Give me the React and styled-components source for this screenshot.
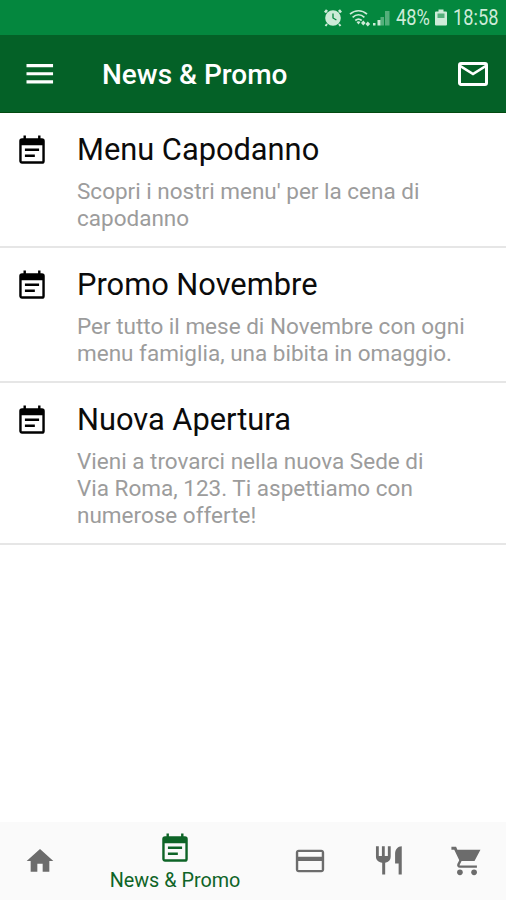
import React from "react";
import styled, { createGlobalStyle } from "styled-components";

const GlobalStyle = createGlobalStyle`
  * {
    box-sizing: border-box;
  }
  body {
    margin: 0;
    background-color: white;
    font-family: Roboto, "Liberation Sans", sans-serif;
  }
`;

const Screen = styled.div`
  width: 506px;
  height: 900px;
  display: flex;
  flex-direction: column;
  background-color: white;
  overflow: hidden;
`;

const StatusBar = styled.div`
  height: 35px;
  padding-left: 324px;
  display: flex;
  align-items: center;
  background-color: #04873e;
  color: #cdebd8;
`;

const StatusIcon = styled.svg`
  flex: none;
  display: block;
  width: ${(props) => props.$width}px;
  height: 20px;
  margin-right: ${(props) => props.$gap}px;
  fill: currentColor;
`;

const StatusText = styled.span`
  flex: none;
  width: ${(props) => props.$width}px;
  font-size: 21.5px;
  line-height: 35px;
  white-space: nowrap;
  transform: scaleX(0.85);
  transform-origin: left center;
`;

const Header = styled.header`
  height: 78px;
  padding: 0 15px 0 22px;
  display: flex;
  align-items: center;
  background-color: #046127;
  border-bottom: 1px solid #024a10;
  color: white;
`;

const HeaderTitle = styled.h1`
  flex: 1;
  margin: 2px 0 0 44px;
  font-size: 28px;
  font-weight: 500;
  line-height: 36px;
`;

const Icon = styled.svg`
  flex: none;
  display: block;
  width: ${(props) => props.$size}px;
  height: ${(props) => props.$size}px;
  fill: currentColor;
`;

const NewsList = styled.main`
  flex: 1;
`;

const NewsItem = styled.article`
  display: flex;
  padding: 18px 20px 14px 15px;
  border-bottom: 2px solid #e6e6e6;
`;

const NewsIcon = styled.div`
  padding-top: 3px;
`;

const NewsBody = styled.div`
  margin-left: 28px;
`;

const NewsTitle = styled.h2`
  margin: 0 0 9px;
  font-size: 30.8px;
  font-weight: 400;
  line-height: 38px;
  color: #0b0b0b;
`;

const NewsText = styled.p`
  margin: 0;
  font-size: 22.5px;
  line-height: 27px;
  white-space: pre-line;
  color: #9c9c9c;
`;

const TabBar = styled.nav`
  height: 78px;
  display: grid;
  grid-template-columns: 80px 190px 80px 78px 78px;
  background-color: #fafafa;
`;

const Tab = styled.div`
  display: flex;
  flex-direction: column;
  align-items: center;
  justify-content: center;
  color: ${(props) => (props.$active ? "#0e6427" : "#6c6c6c")};
`;

const TabLabel = styled.span`
  margin: 3px 0 -3px;
  font-size: 19.8px;
  line-height: 24px;
`;

function EventIcon({ size }) {
  return (
    <Icon $size={size} viewBox="0 0 24 24">
      <path d="M17 10.3H7v1.7h10zM19 3h-1V1h-1.7v2H7.7V1H6v2H5a2 2 0 0 0-2 2v14c0 1.1.9 2 2 2h14a2 2 0 0 0 2-2V5a2 2 0 0 0-2-2zm.3 16.3H4.7V8h14.6zM14 14.5H7v1.7h7z" />
    </Icon>
  );
}

const news = [
  {
    title: "Menu Capodanno",
    text: "Scopri i nostri menu' per la cena di\ncapodanno",
  },
  {
    title: "Promo Novembre",
    text: "Per tutto il mese di Novembre con ogni\nmenu famiglia, una bibita in omaggio.",
  },
  {
    title: "Nuova Apertura",
    text: "Vieni a trovarci nella nuova Sede di\nVia Roma, 123. Ti aspettiamo con\nnumerose offerte!",
  },
];

function App() {
  return (
    <Screen>
      <GlobalStyle />
      <StatusBar>
        <StatusIcon $width={18} $gap={7} viewBox="0 0 18 20">
          <path d="M3 2 1 4.5M15 2l2 2.5" stroke="currentColor" strokeWidth="2.6" />
          <path d="m3 16-1.5 2M15 16l1.5 2" stroke="currentColor" strokeWidth="2" />
          <circle cx="9" cy="10" r="7.8" />
          <path d="M9 5.5V10l3.4 2" fill="none" stroke="#04873e" strokeWidth="1.3" />
        </StatusIcon>
        <StatusIcon $width={22} $gap={2} viewBox="0 0 22 20">
          <g fill="none" stroke="currentColor" strokeWidth="1.7">
            <path d="M1 6.2c5-4.6 12-4.6 17 0" />
            <path d="M3.6 9.4c3.6-3.3 8.2-3.3 11.8 0" />
            <path d="M6.3 12.5c2-1.8 4.4-1.8 6.4 0" />
          </g>
          <path d="m9.5 16.5-2-2.4c1.2-1 2.8-1 4 0z" />
          <path d="m12 15 2.3-2.5 2.3 2.5-2.3 2.5zM16.5 16l2.3-2.5 2.3 2.5-2.3 2.5z" />
        </StatusIcon>
        <StatusIcon $width={17} $gap={6} viewBox="0 0 17 20">
          <path d="M0 15h2.5v2.5H0zM4.5 12h3v5.5h-3z" />
          <path d="M7.5 9H11v8.5H7.5zM12 3h4.5v14.5H12z" opacity="0.4" />
        </StatusIcon>
        <StatusText $width={39}>48%</StatusText>
        <StatusIcon $width={12} $gap={6} viewBox="0 0 12 20">
          <path d="M3.5 1.5h5v2H11a1 1 0 0 1 1 1v12a1 1 0 0 1-1 1H1a1 1 0 0 1-1-1v-12a1 1 0 0 1 1-1h2.5z" />
          <path d="M2.5 5.5h7V10h-7z" fill="#04873e" opacity="0.6" />
        </StatusIcon>
        <StatusText $width={50}>18:58</StatusText>
      </StatusBar>

      <Header>
        <Icon $size={36} viewBox="0 0 24 24">
          <path d="M3 5.4h17.7v2.1H3zM3 10.8h17.7v2.1H3zM3 16.2h17.7v2.1H3z" />
        </Icon>
        <HeaderTitle>News &amp; Promo</HeaderTitle>
        <Icon $size={36} viewBox="0 0 24 24">
          <path d="M20 4H4a2 2 0 0 0-2 2v12c0 1.1.9 2 2 2h16a2 2 0 0 0 2-2V6a2 2 0 0 0-2-2zm0 14H4V8l8 5 8-5zm-8-7L4 6h16z" />
        </Icon>
      </Header>

      <NewsList>
        {news.map((item) => (
          <NewsItem key={item.title}>
            <NewsIcon>
              <EventIcon size={34} />
            </NewsIcon>
            <NewsBody>
              <NewsTitle>{item.title}</NewsTitle>
              <NewsText>{item.text}</NewsText>
            </NewsBody>
          </NewsItem>
        ))}
      </NewsList>

      <TabBar>
        <Tab>
          <Icon $size={32} viewBox="0 0 24 24">
            <path d="M10 20v-6h4v6h5v-8h3L12 3 2 12h3v8z" />
          </Icon>
        </Tab>
        <Tab $active>
          <EventIcon size={34} />
          <TabLabel>News &amp; Promo</TabLabel>
        </Tab>
        <Tab>
          <Icon $size={34} viewBox="0 0 24 24">
            <path d="M20 4H4c-1.1 0-2 .9-2 2v12c0 1.1.9 2 2 2h16c1.1 0 2-.9 2-2V6c0-1.1-.9-2-2-2zm.3 14.3H3.7V12h16.6zm0-9.3H3.7V5.7h16.6z" />
          </Icon>
        </Tab>
        <Tab>
          <Icon $size={34} viewBox="0 0 24 24">
            <path d="M2.8 1.5h2v7H7v-7h2v7h2.2v-7h2V9c0 2.3-1.5 3.8-3.9 4.2v8.3H7.2v-8.3C4.6 12.8 2.8 11.3 2.8 9z" />
            <path d="M21 1.5c-2.8 0-4.7 2.5-4.7 5.2v7h2.5v7.8H21z" />
          </Icon>
        </Tab>
        <Tab>
          <Icon $size={34} viewBox="0 0 24 24">
            <path d="M1 2h3.3l.9 2h16.3l-4.200 8H6.800L3 4H1z" />
            <path
              d="m7.5 11.5-1.500 2.900c-.4.8.1 1.600 1 1.600h12"
              fill="none"
              stroke="currentColor"
              strokeWidth="1.7"
            />
            <circle cx="7" cy="20" r="2" />
            <circle cx="17" cy="20" r="2" />
          </Icon>
        </Tab>
      </TabBar>
    </Screen>
  );
}

export default App;
